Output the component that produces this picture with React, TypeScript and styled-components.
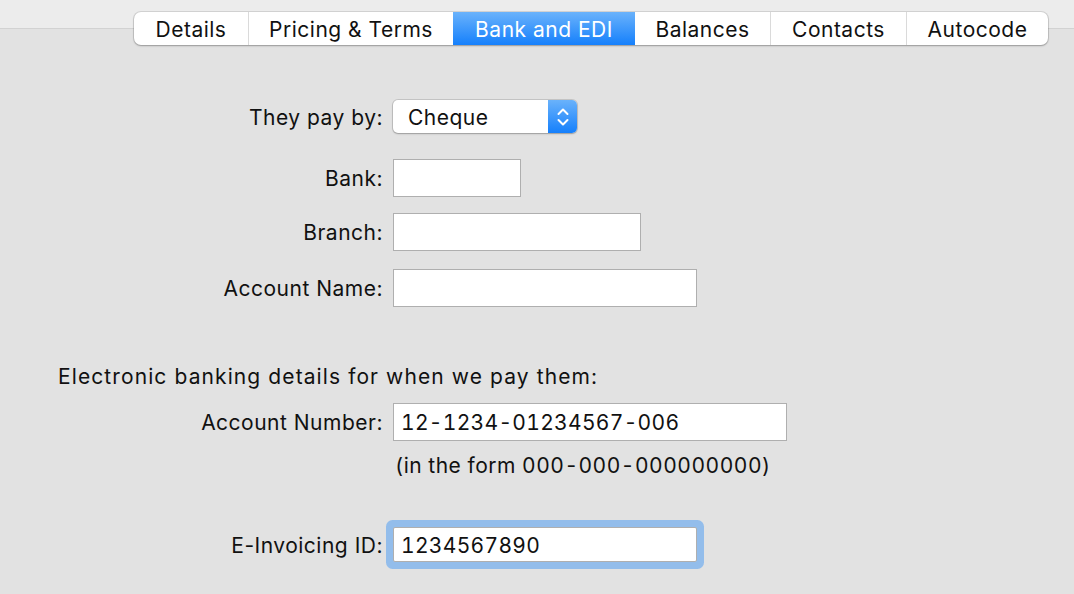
import styled, { createGlobalStyle } from 'styled-components'

const GlobalStyle = createGlobalStyle`
  html, body {
    margin: 0;
    padding: 0;
  }
  body {
    font-family: Inter, "Liberation Sans", sans-serif;
    -webkit-font-smoothing: antialiased;
  }
`

const Window = styled.div`
    width: 1074px;
    height: 594px;
    overflow: hidden;
    display: flex;
    flex-direction: column;
    color: #111111;
    font-size: 21px;
    letter-spacing: 0.5px;
    background: linear-gradient(
        to bottom,
        #ececec 0,
        #ececec 28px,
        #d2d2d2 28px,
        #d2d2d2 29px,
        #e2e2e2 29px
    );
`

const TabRow = styled.div`
    display: flex;
    justify-content: flex-end;
    padding: 12px 26px 0 0;
`

const TabBar = styled.div`
    display: flex;
    height: 33px;
    background-color: #ffffff;
    border-radius: 7px;
    overflow: hidden;
    box-shadow: 0 0 0 1px rgba(0, 0, 0, 0.1), 0 1px 2px rgba(0, 0, 0, 0.25);
`

const Tab = styled.div<{ $width: number; $active?: boolean; $divider?: boolean }>`
    width: ${p => p.$width}px;
    display: flex;
    align-items: center;
    justify-content: center;
    box-sizing: border-box;
    padding-top: 2px;
    white-space: nowrap;
    border-left: ${p => (p.$divider ? '1px solid #dadada' : 'none')};
    color: ${p => (p.$active ? '#ffffff' : '#111111')};
    background: ${p => (p.$active ? 'linear-gradient(to bottom, #6ab2fb, #1580fc)' : 'transparent')};
`

const Form = styled.div`
    display: flex;
    flex-direction: column;
`

const Row = styled.div<{ $top: number }>`
    display: grid;
    grid-template-columns: 383px auto;
    column-gap: 10px;
    align-items: center;
    justify-items: start;
    margin-top: ${p => p.$top}px;
`

const Label = styled.div`
    justify-self: end;
    white-space: nowrap;
    padding-top: 1px;
`

const Caption = styled.div<{ $top: number }>`
    margin-top: ${p => p.$top}px;
    padding-left: 58px;
    line-height: 26px;
    letter-spacing: 1.1px;
`

const Hint = styled.div`
    line-height: 26px;
    padding-left: 2px;
    font-variant-numeric: tabular-nums;
`

const TextField = styled.input<{ $width: number; $height?: number; $focused?: boolean }>`
    width: ${p => p.$width}px;
    height: ${p => p.$height ?? 38}px;
    box-sizing: border-box;
    border: 1px solid #afafaf;
    background-color: #ffffff;
    font: inherit;
    font-variant-numeric: tabular-nums;
    letter-spacing: 0.3px;
    color: #111111;
    padding: 1px 7px 0;
    margin: 0;
    outline: none;
    border-radius: ${p => (p.$focused ? '2px' : '0')};
    box-shadow: ${p => (p.$focused ? '0 0 0 7px #93bdeb' : 'none')};
`

const Select = styled.div`
    width: 184px;
    height: 33px;
    display: flex;
    background-color: #ffffff;
    border-radius: 5px;
    box-shadow: 0 0 0 1px rgba(0, 0, 0, 0.12), 0 1px 2px rgba(0, 0, 0, 0.22);
    overflow: hidden;
`

const SelectValue = styled.div`
    flex: 1;
    display: flex;
    align-items: center;
    padding: 2px 0 0 15px;
`

const Stepper = styled.div`
    width: 29px;
    display: flex;
    align-items: center;
    justify-content: center;
    background: linear-gradient(to bottom, #6ab2fb, #1580fc);
`

function Chevrons() {
  return (
    <svg width="14" height="22" viewBox="0 0 14 22" fill="none">
      <path d="M2.5 8 L7 3.5 L11.5 8" stroke="#ffffff" strokeWidth="2" strokeLinecap="round" strokeLinejoin="round" />
      <path d="M2.5 14 L7 18.5 L11.5 14" stroke="#ffffff" strokeWidth="2" strokeLinecap="round" strokeLinejoin="round" />
    </svg>
  )
}

const tabs = [
  { name: 'Details', width: 114 },
  { name: 'Pricing & Terms', width: 205 },
  { name: 'Bank and EDI', width: 182, active: true },
  { name: 'Balances', width: 135 },
  { name: 'Contacts', width: 136 },
  { name: 'Autocode', width: 142 },
]

export default function App() {
  return (
    <>
      <GlobalStyle />
      <Window>
        <TabRow>
          <TabBar>
            {tabs.map((t, i) => (
              <Tab
                key={t.name}
                $width={t.width}
                $active={t.active}
                $divider={i > 0 && !t.active && !tabs[i - 1].active}
              >
                {t.name}
              </Tab>
            ))}
          </TabBar>
        </TabRow>

        <Form>
          <Row $top={55}>
            <Label>They pay by:</Label>
            <Select>
              <SelectValue>Cheque</SelectValue>
              <Stepper><Chevrons /></Stepper>
            </Select>
          </Row>
          <Row $top={26}>
            <Label>Bank:</Label>
            <TextField $width={128} defaultValue="" />
          </Row>
          <Row $top={16}>
            <Label>Branch:</Label>
            <TextField $width={248} defaultValue="" />
          </Row>
          <Row $top={18}>
            <Label>Account Name:</Label>
            <TextField $width={304} defaultValue="" />
          </Row>

          <Caption $top={57}>Electronic banking details for when we pay them:</Caption>

          <Row $top={13}>
            <Label>Account Number:</Label>
            <TextField $width={394} defaultValue="12-1234-01234567-006" />
          </Row>
          <Row $top={12}>
            <span />
            <Hint>(in the form 000-000-000000000)</Hint>
          </Row>
          <Row $top={48}>
            <Label>E-Invoicing ID:</Label>
            <TextField $width={304} $height={35} $focused defaultValue="1234567890" />
          </Row>
        </Form>
      </Window>
    </>
  )
}
